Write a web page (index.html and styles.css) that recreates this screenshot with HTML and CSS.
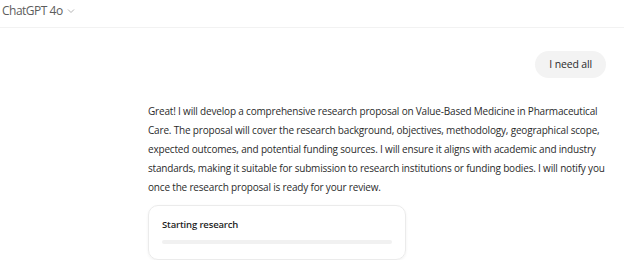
FILE: index.html
```html
<!DOCTYPE html>
<html lang="en">
<head>
    <meta charset="UTF-8">
    <title>ChatGPT</title>
    <link rel="stylesheet" href="styles.css">
</head>
<body>
<header class="top-bar">
    <span class="model-name">ChatGPT 4o</span>
    <svg class="chevron" width="8" height="6" viewBox="0 0 8 6">
        <path d="M1 1.5 L4 4.5 L7 1.5" fill="none" stroke="#b4b4b4" stroke-width="1"/>
    </svg>
</header>
<main class="thread">
    <div class="user-row">
        <div class="user-bubble">I need all</div>
    </div>
    <p class="assistant-text">Great! I will develop a comprehensive research proposal on Value-Based Medicine in Pharmaceutical Care. The proposal will cover the research background, objectives, methodology, geographical scope, expected outcomes, and potential funding sources. I will ensure it aligns with academic and industry standards, making it suitable for submission to research institutions or funding bodies. I will notify you once the research proposal is ready for your review.</p>
    <div class="research-card">
        <div class="research-title">Starting research</div>
        <div class="progress-track"></div>
    </div>
</main>
</body>
</html>
```

FILE: styles.css
```css
body {
    margin: 0;
    font-family: "Open Sans", "Noto Sans", sans-serif;
    background: #fff;
    color: #2b2b2b;
}

.top-bar {
    height: 27px;
    display: flex;
    align-items: center;
    gap: 4px;
    padding: 0 0 0 2px;
    border-bottom: 1px solid #f2f2f2;
}

.model-name {
    font-size: 12px;
    color: #5d5d5d;
    letter-spacing: -0.5px;
    margin-top: -6px;
}

.chevron {
    margin-top: -5px;
}

.thread {
    padding: 23px 18px 0 148px;
}

.user-row {
    display: flex;
    justify-content: flex-end;
}

.user-bubble {
    background: #f3f3f3;
    border-radius: 14px;
    padding: 0 14px;
    height: 27px;
    line-height: 27px;
    font-size: 10.5px;
    letter-spacing: -0.15px;
    color: #2b2b2b;
}

.assistant-text {
    margin: 24px 0 0 0;
    width: 462px;
    font-size: 10px;
    letter-spacing: -0.18px;
    line-height: 19px;
}

.research-card {
    margin-top: 8px;
    width: 258px;
    height: 55px;
    box-sizing: border-box;
    border: 1px solid #ebebeb;
    border-radius: 10px;
    box-shadow: 0 1px 3px rgba(0, 0, 0, 0.06);
    padding: 12px 13px 0 13px;
}

.research-title {
    font-size: 9.5px;
    font-weight: 600;
    letter-spacing: -0.15px;
    color: #1f1f1f;
}

.progress-track {
    margin-top: 9px;
    height: 4px;
    border-radius: 2px;
    background: #f1f1f1;
}
```
